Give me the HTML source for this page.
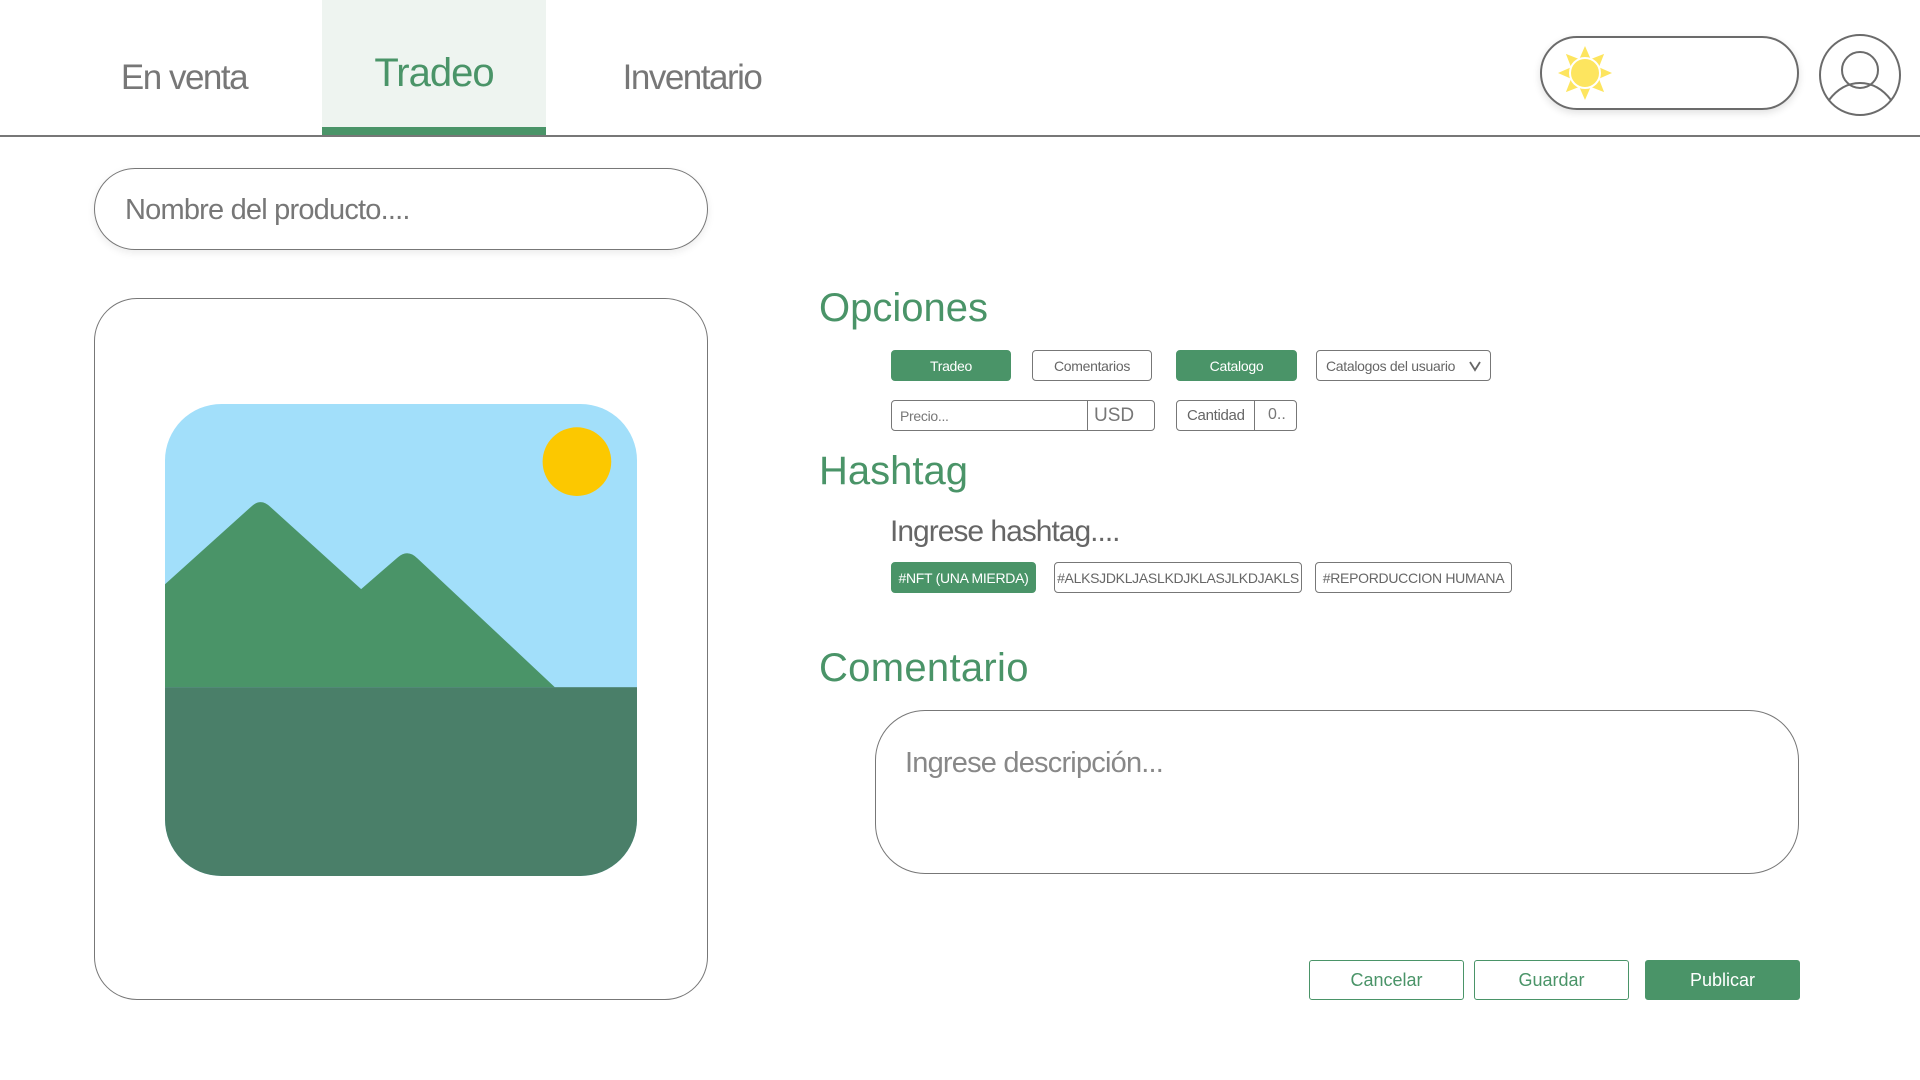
<!DOCTYPE html>
<html><head><meta charset="utf-8"><style>
*{box-sizing:border-box;margin:0;padding:0}
body{width:1920px;height:1080px;background:#fff;font-family:"Liberation Sans",sans-serif;position:relative;overflow:hidden;color:#6b6b6b}
.a{position:absolute}
.tab{position:absolute;top:10px;height:136px;display:flex;align-items:center;justify-content:center;font-size:35px;color:#777;letter-spacing:-1px}
.g{color:#4a9468}
.h{position:absolute;left:819px;font-size:40px;color:#4a9468;letter-spacing:0px}
.btn{position:absolute;height:31px;border:1px solid #777;border-radius:4px;display:flex;align-items:center;justify-content:center;font-size:14px;color:#666;background:#fff;letter-spacing:-0.3px}
.fill{background:#4a9468;border-color:#4a9468;color:#fff}
.bb{position:absolute;top:960px;height:40px;width:155px;border:1px solid #4a9468;border-radius:3px;display:flex;align-items:center;justify-content:center;font-size:18px;color:#4a9468;background:#fff}
</style></head><body>
<div class="a" style="left:322px;top:0;width:224px;height:136px;background:#eef4f0"></div>
<div class="a" style="left:322px;top:127px;width:224px;height:9px;background:#4a9468"></div>
<div class="a" style="left:0;top:135px;width:1920px;height:2px;background:#777"></div>
<div class="tab" style="left:94px;width:180px;letter-spacing:-1.5px">En venta</div>
<div class="tab g" style="left:322px;width:224px;font-size:40px;top:5px">Tradeo</div>
<div class="tab" style="left:592px;width:200px;letter-spacing:-1.5px">Inventario</div>

<div class="a" style="left:1540px;top:36px;width:259px;height:74px;border:2px solid #6b6b6b;border-radius:37px;box-shadow:0 3px 8px rgba(0,0,0,.12)"></div>
<svg class="a" style="left:1555px;top:43px" width="60" height="60" viewBox="-30 -30 60 60">
<polygon fill="#fde55f" points="0,-27 5.7,-13.9 19.1,-19.1 13.9,-5.7 27,0 13.9,5.7 19.1,19.1 5.7,13.9 0,27 -5.7,13.9 -19.1,19.1 -13.9,5.7 -27,0 -13.9,-5.7 -19.1,-19.1 -5.7,-13.9"/>
<circle r="15" fill="#fde55f" stroke="#fff" stroke-width="2"/>
</svg>
<svg class="a" style="left:1818px;top:33px" width="84" height="84" viewBox="0 0 84 84">
<circle cx="42" cy="42" r="40" fill="none" stroke="#6b6b6b" stroke-width="2"/>
<circle cx="42" cy="37" r="18" fill="none" stroke="#6b6b6b" stroke-width="2"/>
<path d="M11 67 Q24 50 42 50 Q60 50 73 67" fill="none" stroke="#6b6b6b" stroke-width="2"/>
</svg>

<div class="a" style="left:94px;top:168px;width:614px;height:82px;border:1.5px solid #777;border-radius:41px;box-shadow:0 3px 8px rgba(0,0,0,.08);font-size:29px;color:#777;padding:25px 0 0 30px;letter-spacing:-0.8px">Nombre del producto....</div>

<div class="a" style="left:94px;top:298px;width:614px;height:702px;border:1.5px solid #777;border-radius:43px"></div>
<svg class="a" style="left:165px;top:404px" width="472" height="472" viewBox="0 0 385 385">
<defs><clipPath id="c"><rect width="385" height="385" rx="46"/></clipPath></defs>
<g clip-path="url(#c)">
<rect width="385" height="385" fill="#a2dffa"/>
<path d="M0 147 L70 84 Q78 76 86 84 L160 151 L190 125 Q198 118 206 126 L318 231 L0 231Z" fill="#4a9468"/>
<rect y="231" width="385" height="154" fill="#4a7f69"/>
<circle cx="336" cy="47" r="28" fill="#fcc800"/>
</g></svg>

<div class="h" style="top:286px">Opciones</div>
<div class="btn fill" style="left:891px;top:350px;width:120px">Tradeo</div>
<div class="btn" style="left:1032px;top:350px;width:120px">Comentarios</div>
<div class="btn fill" style="left:1176px;top:350px;width:121px">Catalogo</div>
<div class="btn" style="left:1316px;top:350px;width:175px;justify-content:flex-start;padding-left:9px">Catalogos del usuario
<svg class="a" style="right:8px;top:9px" width="14" height="12" viewBox="0 0 14 12"><path d="M2 2 L7 10 L12 2" fill="none" stroke="#666" stroke-width="1.8"/></svg></div>
<div class="btn" style="left:891px;top:400px;width:264px;justify-content:flex-start;padding-left:8px;font-size:14px;color:#777">Precio...</div>
<div class="a" style="left:1087px;top:400px;width:1px;height:31px;background:#777"></div>
<div class="a" style="left:1094px;top:405px;font-size:19px;color:#777">USD</div>
<div class="btn" style="left:1176px;top:400px;width:121px;justify-content:flex-start;padding-left:10px;font-size:15px">Cantidad</div>
<div class="a" style="left:1254px;top:400px;width:1px;height:31px;background:#777"></div>
<div class="a" style="left:1268px;top:406px;font-size:16px;color:#777">0..</div>

<div class="h" style="top:449px">Hashtag</div>
<div class="a" style="left:890px;top:515px;font-size:30px;color:#666;letter-spacing:-1px">Ingrese hashtag....</div>
<div class="btn fill" style="left:891px;top:562px;width:145px;font-size:14px">#NFT (UNA MIERDA)</div>
<div class="btn" style="left:1054px;top:562px;width:248px;font-size:14px">#ALKSJDKLJASLKDJKLASJLKDJAKLS</div>
<div class="btn" style="left:1315px;top:562px;width:197px;font-size:14px">#REPORDUCCION HUMANA</div>

<div class="h" style="top:646px;letter-spacing:0.3px">Comentario</div>
<div class="a" style="left:875px;top:710px;width:924px;height:164px;border:1.5px solid #777;border-radius:50px;font-size:29px;color:#888;padding:36px 0 0 29px;letter-spacing:-0.8px">Ingrese descripción...</div>

<div class="bb" style="left:1309px">Cancelar</div>
<div class="bb" style="left:1474px">Guardar</div>
<div class="bb" style="left:1645px;background:#4a9468;color:#fff">Publicar</div>
</body></html>
